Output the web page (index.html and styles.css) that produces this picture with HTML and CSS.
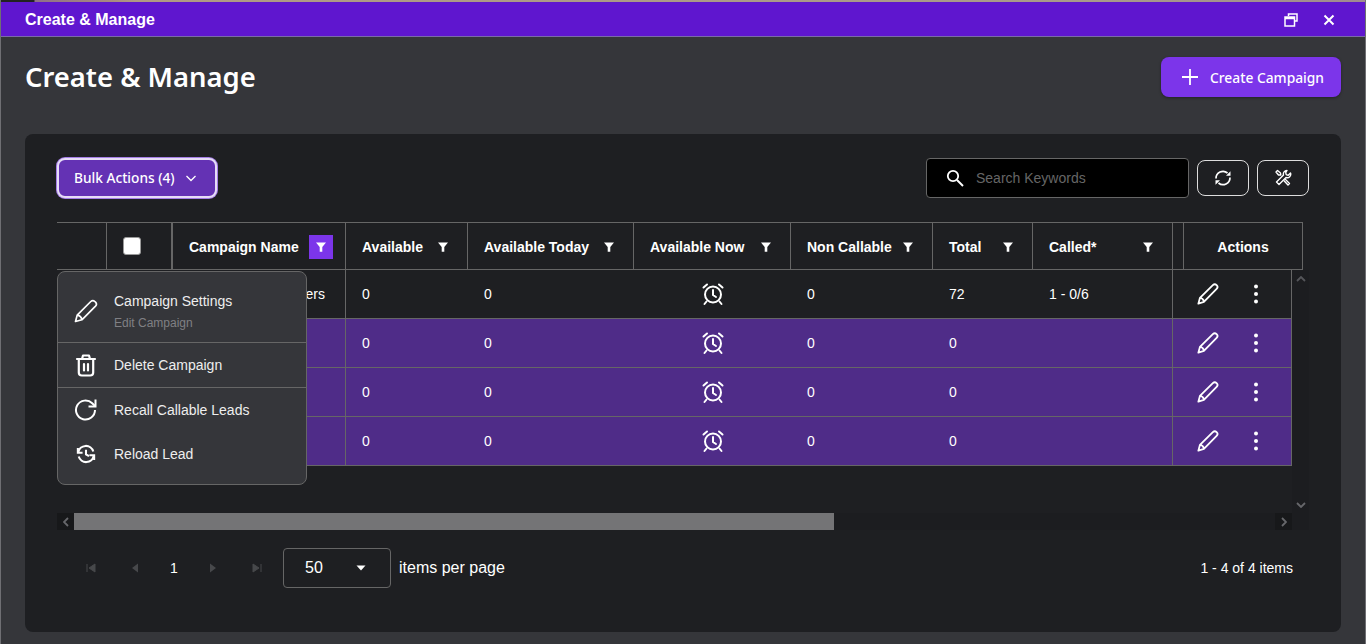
FILE: index.html
```html
<!DOCTYPE html>
<html lang="en">

<head>
    <meta charset="UTF-8">
    <title>Create &amp; Manage</title>
    <link rel="stylesheet" href="styles.css">
</head>

<body>
    <svg class="icon-defs" width="0" height="0">
        <defs>
            <symbol id="i-filter" viewBox="0 0 12 12"><path d="M1 1.500h10L7.300 6v4.800H4.700V6z" fill="#fff"/></symbol>
            <symbol id="i-pencil" viewBox="0 0 24 24"><path d="M1.500 22.500l1.700-6.200L17.300 2.400a2.900 2.900 0 0 1 4.100 0a2.900 2.900 0 0 1 0 4.100L7.500 20.700zM3.200 16.300c2.200.2 4 2 4.300 4.400" fill="none" stroke="#fff" stroke-width="2" stroke-linejoin="round"/></symbol>
            <symbol id="i-alarm" viewBox="0 0 24 24"><g fill="none" stroke="#fff" stroke-width="2" stroke-linecap="round"><circle cx="12" cy="12.500" r="8"/><path d="M12 8v5l3 2M2.500 5.500L6 2.500M21.500 5.500L18 2.500M5.500 19.500L3.500 22M18.500 19.500l2 2.500"/></g></symbol>
            <symbol id="i-dots" viewBox="0 0 24 24"><circle cx="12" cy="4.500" r="2" fill="#fff"/><circle cx="12" cy="12" r="2" fill="#fff"/><circle cx="12" cy="19.500" r="2" fill="#fff"/></symbol>
        </defs>
    </svg>

    <div class="window">
        <div class="top-strip"></div>
        <div class="title-bar">
            <span class="title-text">Create &amp; Manage</span>
            <div class="title-btns">
                <svg class="win-icon" viewBox="0 0 14 14"><path d="M4.500 3V1h8.500v7h-2.500M1 4h9.500v9H1z M1 5.500h9.500" fill="none" stroke="#fff" stroke-width="1.500"/></svg>
                <svg class="win-icon" viewBox="0 0 14 14"><path d="M2.500 2.500l9 9M11.500 2.500l-9 9" stroke="#fff" stroke-width="2"/></svg>
            </div>
        </div>

        <div class="page-head">
            <h1 class="page-title">Create &amp; Manage</h1>
            <button class="create-btn">
                <svg class="plus-icon" viewBox="0 0 18 18"><path d="M9 1v16M1 9h16" stroke="#fff" stroke-width="1.800"/></svg>
                Create Campaign
            </button>
        </div>

        <div class="card">
            <div class="toolbar">
                <button class="bulk-btn">
                    Bulk Actions (4)
                    <svg class="chev-icon" viewBox="0 0 12 12"><path d="M1.500 4l4.500 4.500L10.500 4" fill="none" stroke="#fff" stroke-width="1.300"/></svg>
                </button>
                <div class="toolbar-right">
                    <div class="search-box">
                        <svg class="search-icon" viewBox="0 0 18 18"><circle cx="7" cy="7" r="5.200" fill="none" stroke="#fff" stroke-width="1.800"/><path d="M11 11l6 6" stroke="#fff" stroke-width="2"/></svg>
                        <span class="search-placeholder">Search Keywords</span>
                    </div>
                    <button class="tool-btn">
                        <svg class="tool-icon" viewBox="0 0 18 18"><g fill="none" stroke="#fff" stroke-width="1.700"><path d="M2 9.500A7 7 0 0 1 13.500 4"/><path d="M16 8.500A7 7 0 0 1 4.500 14"/></g><path d="M16.500 2.200v4.500H12zM1.500 15.800v-4.500H6z" fill="#fff"/></svg>
                    </button>
                    <button class="tool-btn">
                        <svg class="tool-icon" viewBox="0 0 18 18"><g fill="none" stroke="#fff" stroke-width="1.400" stroke-linejoin="round"><path d="M13 1.500a3.500 3.500 0 0 0-3.500 4.500L2.500 13 5 15.500l7-7a3.500 3.500 0 0 0 4.500-4.500l-2.300 2.300-2-.7-.5-2z"/><path d="M6.800 6L6.500 4l-3-2.500L2 3l2.500 3zM11 10l4.500 4.500-1.500 1.500-4.200-4.500"/></g></svg>
                    </button>
                </div>
            </div>

            <div class="table-wrap">
                <div class="table-head">
                    <div class="th"></div>
                    <div class="th th-check"><span class="checkbox"></span></div>
                    <div class="th"><span>Campaign Name</span><span class="filter filter-on"><svg class="filter-icon"><use href="#i-filter"/></svg></span></div>
                    <div class="th"><span>Available</span><span class="filter"><svg class="filter-icon"><use href="#i-filter"/></svg></span></div>
                    <div class="th"><span>Available Today</span><span class="filter"><svg class="filter-icon"><use href="#i-filter"/></svg></span></div>
                    <div class="th"><span>Available Now</span><span class="filter"><svg class="filter-icon"><use href="#i-filter"/></svg></span></div>
                    <div class="th"><span>Non Callable</span><span class="filter"><svg class="filter-icon"><use href="#i-filter"/></svg></span></div>
                    <div class="th"><span>Total</span><span class="filter"><svg class="filter-icon"><use href="#i-filter"/></svg></span></div>
                    <div class="th"><span>Called*</span><span class="filter"><svg class="filter-icon"><use href="#i-filter"/></svg></span></div>
                    <div class="th th-gap"></div>
                    <div class="th th-actions">Actions</div>
                </div>

                <div class="table-mid">
                    <div class="table-body">
                        <div class="row">
                            <div class="td"></div>
                            <div class="td"></div>
                            <div class="td td-name">ers</div>
                            <div class="td">0</div>
                            <div class="td">0</div>
                            <div class="td td-center"><svg class="alarm-icon"><use href="#i-alarm"/></svg></div>
                            <div class="td">0</div>
                            <div class="td">72</div>
                            <div class="td td-last">1 - 0/6</div>
                            <div class="td td-actions"><svg class="pencil-icon"><use href="#i-pencil"/></svg><svg class="dots-icon"><use href="#i-dots"/></svg></div>
                        </div>
                        <div class="row row-selected">
                            <div class="td"></div>
                            <div class="td"></div>
                            <div class="td td-name"></div>
                            <div class="td">0</div>
                            <div class="td">0</div>
                            <div class="td td-center"><svg class="alarm-icon"><use href="#i-alarm"/></svg></div>
                            <div class="td">0</div>
                            <div class="td">0</div>
                            <div class="td td-last"></div>
                            <div class="td td-actions"><svg class="pencil-icon"><use href="#i-pencil"/></svg><svg class="dots-icon"><use href="#i-dots"/></svg></div>
                        </div>
                        <div class="row row-selected">
                            <div class="td"></div>
                            <div class="td"></div>
                            <div class="td td-name"></div>
                            <div class="td">0</div>
                            <div class="td">0</div>
                            <div class="td td-center"><svg class="alarm-icon"><use href="#i-alarm"/></svg></div>
                            <div class="td">0</div>
                            <div class="td">0</div>
                            <div class="td td-last"></div>
                            <div class="td td-actions"><svg class="pencil-icon"><use href="#i-pencil"/></svg><svg class="dots-icon"><use href="#i-dots"/></svg></div>
                        </div>
                        <div class="row row-selected">
                            <div class="td"></div>
                            <div class="td"></div>
                            <div class="td td-name"></div>
                            <div class="td">0</div>
                            <div class="td">0</div>
                            <div class="td td-center"><svg class="alarm-icon"><use href="#i-alarm"/></svg></div>
                            <div class="td">0</div>
                            <div class="td">0</div>
                            <div class="td td-last"></div>
                            <div class="td td-actions"><svg class="pencil-icon"><use href="#i-pencil"/></svg><svg class="dots-icon"><use href="#i-dots"/></svg></div>
                        </div>
                    </div>
                    <div class="vscroll">
                        <svg class="scroll-arrow" viewBox="0 0 10 6"><path d="M1 5l4-4 4 4" fill="none" stroke="#55565a" stroke-width="1.800"/></svg>
                        <svg class="scroll-arrow" viewBox="0 0 10 6"><path d="M1 1l4 4 4-4" fill="none" stroke="#66676b" stroke-width="1.800"/></svg>
                    </div>
                </div>

                <div class="hscroll">
                    <div class="hscroll-btn"><svg class="scroll-arrow-h" viewBox="0 0 6 10"><path d="M5 1L1 5l4 4" fill="none" stroke="#66676b" stroke-width="1.800"/></svg></div>
                    <div class="hscroll-track"><div class="hscroll-thumb"></div></div>
                    <div class="hscroll-btn"><svg class="scroll-arrow-h" viewBox="0 0 6 10"><path d="M1 1l4 4-4 4" fill="none" stroke="#66676b" stroke-width="1.800"/></svg></div>
                </div>

                <!-- row menu -->
                <div class="row-menu">
                    <div class="menu-item menu-item-big">
                        <svg class="menu-icon menu-icon-low" viewBox="0 0 24 24"><path d="M1.500 22.500l1.700-6.400L16.800 2.500a2.900 2.900 0 0 1 4 0l.7.700a2.900 2.900 0 0 1 0 4L7.900 20.800zM3.200 16.100c2.300.3 4.300 2.200 4.700 4.700" fill="none" stroke="#fff" stroke-width="1.700" stroke-linejoin="round"/></svg>
                        <div class="menu-text menu-text-low">
                            <div>Campaign Settings</div>
                            <div class="menu-sub">Edit Campaign</div>
                        </div>
                    </div>
                    <div class="menu-item">
                        <svg class="menu-icon" viewBox="0 0 24 24"><g fill="none" stroke="#fff" stroke-width="2.200" stroke-linejoin="round" stroke-linecap="round"><path d="M3 6h18M8 6l1-3.500h6L16 6M4.800 6v13.500a3 3 0 0 0 3 3h8.400a3 3 0 0 0 3-3V6"/><path d="M10 11v6.500M14 11v6.500"/></g></svg>
                        <div class="menu-text">Delete Campaign</div>
                    </div>
                    <div class="menu-item menu-item-plain">
                        <svg class="menu-icon" viewBox="0 0 24 24"><path d="M21 12a9.500 9.500 0 1 1-2.800-6.700L21 8" fill="none" stroke="#fff" stroke-width="2"/><path d="M21.500 1.500V8.500h-7" fill="none" stroke="#fff" stroke-width="2"/></svg>
                        <div class="menu-text">Recall Callable Leads</div>
                    </div>
                    <div class="menu-item menu-item-plain">
                        <svg class="menu-icon" viewBox="-2 -2 28 28"><g fill="none" stroke="#fff" stroke-width="2.400"><path d="M3 10A9 9 0 0 1 20.500 9"/><path d="M21 14A9 9 0 0 1 3.500 15"/><path d="M12 7v5.500l3.500 2"/><path d="M2.500 5v5.500H8M21.500 19v-5.500H16"/></g></svg>
                        <div class="menu-text">Reload Lead</div>
                    </div>
                </div>
            </div>

            <div class="pager">
                <div class="pager-left">
                    <span class="pager-btn"><svg class="pager-icon" viewBox="0 0 10 10"><path d="M1 1v8M9 1v8L3 5z" fill="#47484b" stroke="#47484b"/></svg></span>
                    <span class="pager-btn"><svg class="pager-icon" viewBox="0 0 10 10"><path d="M8 0.500v9L2 5z" fill="#47484b"/></svg></span>
                    <span class="pager-num">1</span>
                    <span class="pager-btn"><svg class="pager-icon" viewBox="0 0 10 10"><path d="M2 0.500v9L8 5z" fill="#47484b"/></svg></span>
                    <span class="pager-btn"><svg class="pager-icon" viewBox="0 0 10 10"><path d="M9 1v8M1 1v8L7 5z" fill="#47484b" stroke="#47484b"/></svg></span>
                    <div class="page-size">
                        <span>50</span>
                        <svg class="caret-icon" viewBox="0 0 10 6"><path d="M0.500 0.500h9L5 5.500z" fill="#fff"/></svg>
                    </div>
                    <span class="per-page">items per page</span>
                </div>
                <span class="pager-info">1 - 4 of 4 items</span>
            </div>
        </div>
    </div>
</body>

</html>
```
FILE: styles.css
```css
* {
    box-sizing: border-box;
}

body {
    margin: 0;
    background-color: #35363a;
    font-family: "Liberation Sans", Arial, sans-serif;
    color: #fff;
}

.icon-defs {
    position: absolute;
}

button {
    color: #fff;
    cursor: pointer;
}

.window {
    height: 644px;
    display: flex;
    flex-direction: column;
    overflow: hidden;
    background-color: #35363a;
    border-left: 1px solid #6f6f73;
    border-right: 1px solid #6f6f73;
}

.top-strip {
    height: 2px;
    flex: none;
    background: linear-gradient(90deg, #222 0 33px, #8f6f88 34px, #a98a80 110px, #b09a84 135px, #a89a8a 1100px, #a08a90 100%);
}

/* title bar */
.title-bar {
    height: 35px;
    flex: none;
    display: flex;
    align-items: center;
    justify-content: space-between;
    padding: 1px 24px 0;
    background-color: #5f16cf;
    border-bottom: 1px solid #7a6aa8;
}

.title-text {
    font-size: 16px;
    font-weight: 700;
}

.title-btns {
    display: flex;
    align-items: center;
    gap: 24px;
    padding-right: 5px;
}

.win-icon {
    width: 14px;
    height: 14px;
}

/* page heading */
.page-head {
    height: 97px;
    flex: none;
    display: flex;
    justify-content: space-between;
    align-items: flex-start;
    padding: 20px 24px 0;
}

.page-title {
    margin: 0;
    font-family: "Noto Sans", sans-serif;
    font-size: 27.400px;
    font-weight: 600;
    line-height: 40px;
}

.create-btn {
    width: 180px;
    height: 40px;
    display: flex;
    align-items: center;
    gap: 11px;
    padding: 0 0 0 20px;
    border: none;
    border-radius: 8px;
    background-color: #7c35ea;
    box-shadow: 0 1px 3px rgb(0, 0, 0, 0.35);
    font-family: "Noto Sans", sans-serif;
    font-size: 13.800px;
    font-weight: 500;
}

.plus-icon {
    width: 18px;
    height: 18px;
}

/* card */
.card {
    flex: none;
    height: 498px;
    margin: 0 24px;
    padding: 24px 32px 0;
    border-radius: 8px;
    background-color: #1e1f22;
}

.toolbar {
    height: 40px;
    display: flex;
    justify-content: space-between;
    align-items: center;
}

.bulk-btn {
    width: 160px;
    height: 40px;
    display: flex;
    align-items: center;
    gap: 10px;
    padding: 0 0 2px 15px;
    border: 2px solid #e6dcf7;
    border-radius: 8px;
    background-color: #6432b4;
    box-shadow: 0 0 0 1px #a47de6;
    font-family: "Noto Sans", sans-serif;
    font-size: 13.700px;
    font-weight: 500;
}

.chev-icon {
    width: 12px;
    height: 12px;
    margin-top: 2px;
}

.toolbar-right {
    display: flex;
    align-items: center;
    gap: 8px;
}

.search-box {
    width: 263px;
    height: 40px;
    display: flex;
    align-items: center;
    gap: 12px;
    padding-left: 19px;
    border: 1px solid #666;
    border-radius: 4px;
    background-color: #000;
}

.search-icon {
    width: 18px;
    height: 18px;
}

.search-placeholder {
    font-size: 14px;
    color: #666;
}

.tool-btn {
    width: 52px;
    height: 36px;
    display: flex;
    align-items: center;
    justify-content: center;
    padding: 0;
    border: 1px solid #ddd;
    border-radius: 8px;
    background-color: transparent;
}

.tool-icon {
    width: 18px;
    height: 18px;
}

/* table */
.table-wrap {
    position: relative;
    margin-top: 24px;
}

.table-head {
    width: 1246px;
    height: 48px;
    display: grid;
    grid-template-columns: 50px 66px 173px 122px 166px 157px 142px 100px 140px 11px 119px;
    border-top: 1px solid #666;
    border-bottom: 1px solid #666;
}

.th {
    display: flex;
    align-items: center;
    justify-content: space-between;
    padding: 1px 12px 0 16px;
    border-right: 1px solid #666;
    font-size: 14px;
    font-weight: 700;
}

.th-check {
    justify-content: flex-start;
    padding-top: 0;
    box-shadow: inset -1px 0 0 #666;
}

.th-gap {
    padding: 0;
}

.th-actions {
    justify-content: center;
    padding: 1px 0 0;
}

.checkbox {
    width: 18px;
    height: 18px;
    border: 1px solid #999;
    border-radius: 3px;
    background-color: #fff;
}

.filter {
    width: 24px;
    height: 24px;
    display: flex;
    align-items: center;
    justify-content: center;
}

.filter-on {
    background-color: #7c35ea;
}

.filter-icon {
    width: 12px;
    height: 12px;
}

.table-mid {
    height: 243px;
    display: flex;
}

.table-body {
    width: 1235px;
}

.row {
    height: 49px;
    display: grid;
    grid-template-columns: 50px 66px 173px 122px 166px 157px 142px 100px 140px 119px;
    border-bottom: 1px solid #666;
    font-size: 14px;
}

.row-selected {
    background-color: #4f2c88;
}

.td {
    display: flex;
    align-items: center;
    padding-left: 16px;
    white-space: nowrap;
}

.td-name {
    justify-content: flex-end;
    padding-right: 20px;
    border-right: 1px solid #666;
}

.td-center {
    justify-content: center;
    padding-left: 0;
}

.td-last {
    border-right: 1px solid #666;
}

.td-actions {
    gap: 25px;
    padding-left: 24px;
    border-right: 1px solid #666;
}

.alarm-icon {
    width: 24px;
    height: 24px;
}

.pencil-icon {
    width: 22px;
    height: 22px;
}

.dots-icon {
    width: 24px;
    height: 24px;
}

.vscroll {
    width: 17px;
    display: flex;
    flex-direction: column;
    justify-content: space-between;
    align-items: center;
    padding: 6px 0 5px;
    background-color: #1c1d20;
}

.scroll-arrow {
    width: 10px;
    height: 6px;
}

.hscroll {
    width: 1252px;
    height: 17px;
    display: flex;
    padding-right: 17px;
    background-color: #1c1d20;
}

.hscroll-btn {
    width: 17px;
    flex: none;
    display: flex;
    align-items: center;
    justify-content: center;
    background-color: #17181a;
}

.scroll-arrow-h {
    width: 6px;
    height: 10px;
}

.hscroll-track {
    flex: 1;
}

.hscroll-thumb {
    width: 760px;
    height: 100%;
    background-color: #747476;
}

/* menu over the table */
.row-menu {
    position: absolute;
    top: 49px;
    left: 0;
    width: 250px;
    height: 214px;
    padding-bottom: 8px;
    border: 1px solid #666;
    border-radius: 8px;
    background-color: #35363a;
    font-size: 14px;
}

.menu-item {
    height: 45px;
    display: flex;
    align-items: center;
    gap: 16px;
    padding-left: 16px;
    border-bottom: 1px solid #666;
    color: #eee;
}

.menu-item-big {
    height: 71px;
}

.menu-item-plain {
    height: 44px;
    border-bottom: none;
}

.menu-icon {
    width: 24px;
    height: 24px;
    flex: none;
}

.menu-icon-low {
    margin-top: 8px;
}

.menu-text-low {
    padding-top: 9px;
}

.menu-sub {
    margin-top: 7px;
    font-size: 12px;
    color: #808084;
}

/* pagination */
.pager {
    display: flex;
    justify-content: space-between;
    align-items: center;
    padding: 18px 16px 0 12px;
}

.pager-left {
    display: flex;
    align-items: center;
}

.pager-btn {
    width: 44px;
    display: flex;
    justify-content: center;
}

.pager-icon {
    width: 10px;
    height: 10px;
}

.pager-num {
    width: 34px;
    text-align: center;
    font-size: 14px;
}

.page-size {
    width: 108px;
    height: 40px;
    display: flex;
    align-items: center;
    justify-content: space-between;
    margin-left: 4px;
    padding: 0 24px 0 21px;
    border: 1px solid #666;
    border-radius: 4px;
    font-size: 16px;
}

.caret-icon {
    width: 10px;
    height: 6px;
}

.per-page {
    margin-left: 8px;
    font-size: 16px;
}

.pager-info {
    font-size: 14px;
}
```
